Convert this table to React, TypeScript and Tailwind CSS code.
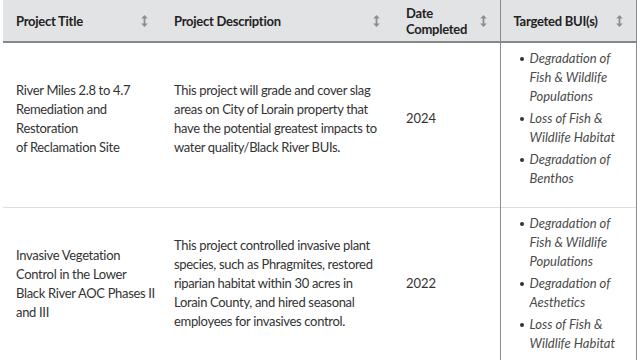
import React from 'react'

type Project = {
  title: string[]
  description: string
  date: string
  buis: string[]
}

const projects: Project[] = [
  {
    title: ['River Miles 2.8 to 4.7 Remediation and Restoration', 'of Reclamation Site'],
    description:
      'This project will grade and cover slag areas on City of Lorain property that have the potential greatest impacts to water quality/Black River BUIs.',
    date: '2024',
    buis: [
      'Degradation of Fish & Wildlife Populations',
      'Loss of Fish & Wildlife Habitat',
      'Degradation of Benthos',
    ],
  },
  {
    title: ['Invasive Vegetation Control in the Lower Black River AOC Phases II and III'],
    description:
      'This project controlled invasive plant species, such as Phragmites, restored riparian habitat within 30 acres in Lorain County, and hired seasonal employees for invasives control.',
    date: '2022',
    buis: [
      'Degradation of Fish & Wildlife Populations',
      'Degradation of Aesthetics',
      'Loss of Fish & Wildlife Habitat',
    ],
  },
]

function SortIcon() {
  return (
    <svg width="7" height="12" viewBox="0 0 7 12" className="shrink-0 text-[#8e8e8e]" fill="currentColor">
      <path d="M3.5 0 L6.8 3.6 H4.4 V8.4 H6.8 L3.5 12 L0.2 8.4 H2.6 V3.6 H0.2 Z" />
    </svg>
  )
}

function HeaderCell({ label, last }: { label: React.ReactNode; last?: boolean }) {
  return (
    <th
      className={`h-[42px] px-[13px] py-0 text-left align-middle font-bold text-[13px] leading-[16px] tracking-[-0.02em] text-[#222] ${
        last ? 'border-x border-[#8c8c8c]' : ''
      }`}
    >
      <div className="flex items-center justify-between gap-2">
        <span>{label}</span>
        <SortIcon />
      </div>
    </th>
  )
}

export default function App() {
  return (
    <div className="h-[360px] w-[640px] overflow-hidden bg-white pl-[3px] pr-[4px] font-['Lato','Liberation_Sans',sans-serif]">
      <table className="w-[633px] table-fixed border-collapse">
        <colgroup>
          <col className="w-[158px]" />
          <col className="w-[232px]" />
          <col className="w-[107px]" />
          <col className="w-[136px]" />
        </colgroup>
        <thead>
          <tr className="bg-[#e2e3e4] border-b-2 border-[#85898a]">
            <HeaderCell label="Project Title" />
            <HeaderCell label="Project Description" />
            <HeaderCell label={<>Date<br />Completed</>} />
            <HeaderCell label="Targeted BUI(s)" last />
          </tr>
        </thead>
        <tbody className="text-[13px] leading-[19px] text-[#333]">
          {projects.map((p) => (
            <tr key={p.date} className="border-b border-[#dedede]">
              <td className="pl-[13px] pr-[4px] py-[6px] align-middle tracking-[-0.025em]">
                <p className="mb-[13px]">
                  {p.title.map((line, i) => (
                    <span key={i} className="block">{line}</span>
                  ))}
                </p>
              </td>
              <td className="px-[13px] py-[6px] align-middle tracking-[-0.025em]">
                <p className="mb-[13px]">{p.description}</p>
              </td>
              <td className="px-[13px] py-[6px] align-middle">
                <p className="mb-[13px]">{p.date}</p>
              </td>
              <td className="border-x border-[#8c8c8c] pl-[19px] pr-[10px] py-[6px] align-middle">
                <ul className="mb-[13px] flex flex-col gap-[3px]">
                  {p.buis.map((b) => (
                    <li key={b} className="flex gap-[6px]">
                      <span className="mt-[8px] h-[4px] w-[4px] shrink-0 rounded-full bg-[#333]" />
                      <em className="text-[#4a4a4a]">{b}</em>
                    </li>
                  ))}
                </ul>
              </td>
            </tr>
          ))}
        </tbody>
      </table>
    </div>
  )
}
